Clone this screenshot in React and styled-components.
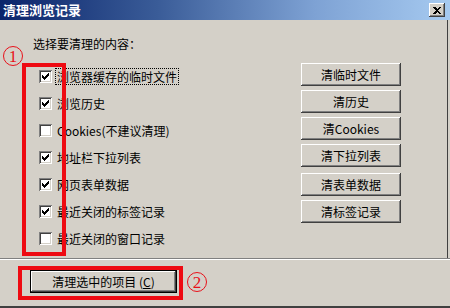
import React from 'react';
import styled, { createGlobalStyle } from 'styled-components';

const GlobalStyle = createGlobalStyle`
  html, body {
    margin: 0;
    padding: 0;
    background: #d4d0c8;
  }
`;

const Window = styled.div`
  position: relative;
  width: 450px;
  height: 308px;
  display: flex;
  flex-direction: column;
  background: #d4d0c8;
  font-family: "Noto Sans CJK SC", "Liberation Sans", sans-serif;
  font-size: 12px;
  color: #000;
  overflow: hidden;
`;

const TitleBar = styled.div`
  height: 20px;
  flex: none;
  display: flex;
  align-items: center;
  justify-content: space-between;
  padding: 0 5px 0 3px;
  background: linear-gradient(to right, #0a246a 0%, #3a5c98 35%, #7ea2d4 70%, #a6caf0 100%);
`;

const Title = styled.span`
  color: #fff;
  font-weight: bold;
  font-size: 13px;
  line-height: 20px;
  letter-spacing: 0px;
`;

const CloseButton = styled.div`
  width: 16px;
  height: 14px;
  display: flex;
  align-items: center;
  justify-content: center;
  background: #d4d0c8;
  box-shadow: inset -1px -1px #404040, inset 1px 1px #fff, inset -2px -2px #808080;
`;

const Content = styled.div`
  height: 238px;
  flex: none;
  display: flex;
  margin-right: 2px;
  border-right: 1px solid #404040;
`;

const LeftColumn = styled.div`
  padding: 16px 0 0 33px;
  display: flex;
  flex-direction: column;
`;

const Label = styled.div`
  line-height: 16px;
  height: 16px;
`;

const List = styled.div`
  margin-top: 11px;
  padding-left: 6px;
  display: flex;
  flex-direction: column;
`;

const Row = styled.div`
  height: 27px;
  display: flex;
  align-items: center;
  gap: 5px;
`;

const Box = styled.div`
  width: 13px;
  height: 13px;
  flex: none;
  background: #fff;
  box-sizing: border-box;
  box-shadow: inset 1px 1px #808080, inset -1px -1px #fff, inset 2px 2px #404040, inset -2px -2px #d4d0c8;
  display: flex;
`;

const ItemText = styled.span`
  line-height: 15px;
  padding: 0 1px;
  margin-left: -1px;
  outline: ${(p) => (p.$focused ? '1px dotted #000' : 'none')};
  white-space: nowrap;
`;

const RightColumn = styled.div`
  margin-left: auto;
  margin-right: 46px;
  padding-top: 43px;
  display: flex;
  flex-direction: column;
  gap: 4px;
`;

const Button = styled.div`
  width: ${(p) => p.$width || 100}px;
  height: 23px;
  box-sizing: border-box;
  display: flex;
  align-items: center;
  justify-content: center;
  background: #d4d0c8;
  margin-top: ${(p) => p.$shift || 0}px;
  box-shadow: inset -1px -1px #404040, inset 1px 1px #fff, inset -2px -2px #808080;
  white-space: nowrap;
`;

const DefaultButton = styled(Button)`
  border: 1px solid #000;
`;

const Separator = styled.div`
  height: 1px;
  flex: none;
  background: #808080;
  border-bottom: 1px solid #fff;
`;

const Footer = styled.div`
  flex: 1;
  padding: 10px 0 0 30px;
  border-bottom: 2px solid #404040;
`;

const Frame = styled.div`
  position: absolute;
  left: ${(p) => p.$x}px;
  top: ${(p) => p.$y}px;
  width: ${(p) => p.$w}px;
  height: ${(p) => p.$h}px;
  box-sizing: border-box;
  border: 4px solid #ee0a12;
`;

const Marker = styled.div`
  position: absolute;
  left: ${(p) => p.$x}px;
  top: ${(p) => p.$y}px;
  width: 20px;
  height: 20px;
  box-sizing: border-box;
  border: 1.5px solid #e8101a;
  border-radius: 50%;
  display: flex;
  align-items: center;
  justify-content: center;
  color: #e8101a;
  font-family: "Liberation Serif", serif;
  font-size: 17px;
  line-height: 1;
`;

const Underline = styled.span`
  text-decoration: underline;
`;

const Check = () => (
  <svg width="13" height="13" viewBox="0 0 13 13" shapeRendering="crispEdges">
    {[5, 6, 7, 6, 5, 4, 3].map((y, i) => (
      <rect key={i} x={3 + i} y={y} width="1" height="3" fill="#000" />
    ))}
  </svg>
);

const items = [
  { text: '浏览器缓存的临时文件', checked: true, focused: true },
  { text: '浏览历史', checked: true },
  { text: 'Cookies(不建议清理)', checked: false },
  { text: '地址栏下拉列表', checked: true },
  { text: '网页表单数据', checked: true },
  { text: '最近关闭的标签记录', checked: true },
  { text: '最近关闭的窗口记录', checked: false },
];

const buttons = [
  { text: '清临时文件' },
  { text: '清历史' },
  { text: '清Cookies' },
  { text: '清下拉列表' },
  { text: '清表单数据', shift: 2 },
  { text: '清标签记录' },
];

export default function App() {
  return (
    <>
      <GlobalStyle />
      <Window>
        <TitleBar>
          <Title>清理浏览记录</Title>
          <CloseButton>
            <svg width="8" height="7" viewBox="0 0 8 7" shapeRendering="crispEdges">
              <path d="M0 0h2l2 2 2-2h2L5 3.5 8 7H6L4 5 2 7H0l3-3.5z" fill="#000" />
            </svg>
          </CloseButton>
        </TitleBar>
        <Content>
          <LeftColumn>
            <Label>选择要清理的内容：</Label>
            <List>
              {items.map((it) => (
                <Row key={it.text}>
                  <Box>{it.checked && <Check />}</Box>
                  <ItemText $focused={it.focused}>{it.text}</ItemText>
                </Row>
              ))}
            </List>
          </LeftColumn>
          <RightColumn>
            {buttons.map((b) => (
              <Button key={b.text} $shift={b.shift}>
                {b.text}
              </Button>
            ))}
          </RightColumn>
        </Content>
        <Separator />
        <Footer>
          <DefaultButton $width={147}>
            清理选中的项目 (<Underline>C</Underline>)
          </DefaultButton>
        </Footer>
        <Frame $x={22} $y={63} $w={44} $h={193} />
        <Frame $x={18} $y={266} $w={165} $h={34} />
        <Marker $x={3} $y={46}>1</Marker>
        <Marker $x={187} $y={272}>2</Marker>
      </Window>
    </>
  );
}
